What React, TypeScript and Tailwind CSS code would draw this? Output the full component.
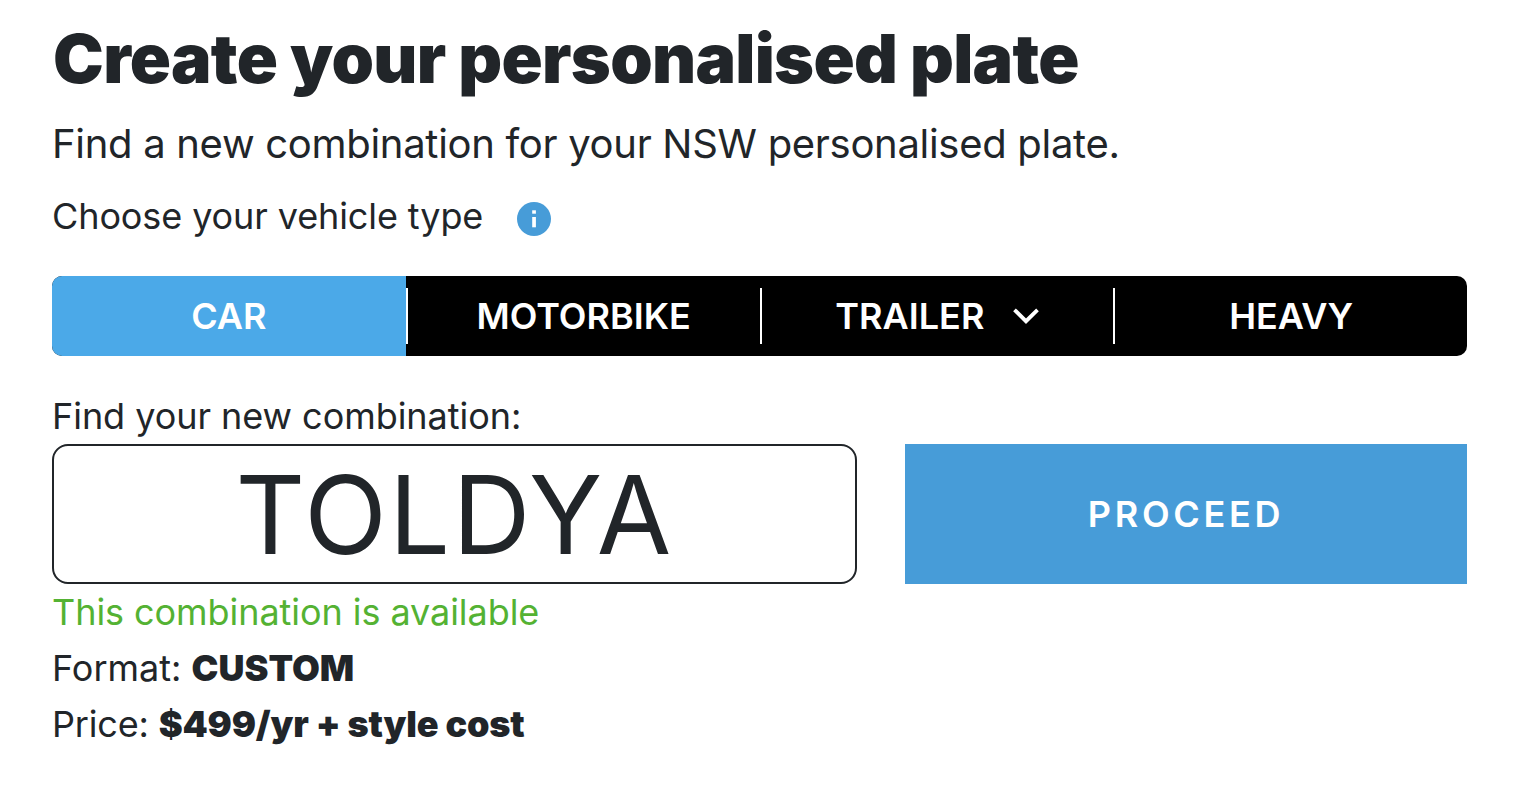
import { useState } from "react";

const VEHICLES = ["Car", "Motorbike", "Trailer", "Heavy"];

function InfoIcon() {
  return (
    <svg width="34" height="34" viewBox="0 0 34 34" aria-hidden="true">
      <circle cx="17" cy="17" r="17" fill="#479cd8" />
      <rect x="15.2" y="8.3" width="3.7" height="3.4" fill="#fff" />
      <rect x="15.2" y="15" width="3.7" height="10.3" fill="#fff" />
    </svg>
  );
}

function ChevronIcon() {
  return (
    <svg width="26" height="16" viewBox="0 0 26 16" fill="none" aria-hidden="true">
      <path d="M1.5 1.8 L13 13.2 L24.5 1.8" stroke="#fff" strokeWidth="3.8" />
    </svg>
  );
}

export default function App() {
  const [vehicle, setVehicle] = useState("Car");
  const [combination, setCombination] = useState("TOLDYA");

  return (
    <main className="h-[788px] bg-white pr-[55px] pl-[52px] pt-[18px] font-['Inter',sans-serif] text-[36px] text-[#212529]">
      <h1 className="h-[86px] pl-px text-[68px] leading-[80px] font-black tracking-[-0.7px] whitespace-nowrap">
        Create your personalised plate
      </h1>
      <p className="h-[82px] text-[40px] leading-[80px] tracking-[-0.3px] whitespace-nowrap">
        Find a new combination for your NSW personalised plate.
      </p>
      <div className="flex h-[90px] items-start gap-[34px] leading-[60px]">
        <span className="tracking-[-0.1px]">Choose your vehicle type</span>
        <button type="button" aria-label="Vehicle type info" className="mt-4">
          <InfoIcon />
        </button>
      </div>

      <div className="grid h-20 grid-cols-4 overflow-hidden rounded-[10px] bg-black font-semibold text-white">
        {VEHICLES.map((name, index) => (
          <button
            key={name}
            type="button"
            onClick={() => setVehicle(name)}
            className={name === vehicle ? "flex items-center bg-[#4ba9e8]" : "flex items-center"}
          >
            <span className={index > 0 ? "h-14 w-0.5 bg-white" : "h-14"} />
            <span className="flex flex-1 items-center justify-center gap-[29px] uppercase">
              {name}
              {name === "Trailer" && <ChevronIcon />}
            </span>
          </button>
        ))}
      </div>

      <label htmlFor="combination" className="mt-8 block h-14 leading-[56px] tracking-[-0.04px]">
        Find your new combination:
      </label>
      <div className="flex gap-12">
        <input
          id="combination"
          value={combination}
          onChange={(event) => setCombination(event.target.value)}
          className="h-[140px] w-[805px] rounded-[16px] border-2 border-[#212529] pt-0.5 text-center text-[108px] tracking-[2.3px] uppercase outline-none"
        />
        <button type="button" className="h-[140px] flex-1 bg-[#479cd8] font-semibold tracking-[3.7px] text-white">
          PROCEED
        </button>
      </div>

      <div className="leading-[56px]">
        <p className="tracking-[-0.06px] text-[#54b233]">This combination is available</p>
        <p>
          Format: <strong className="font-black">CUSTOM</strong>
        </p>
        <p className="tracking-[-0.17px]">
          Price: <strong className="font-black">$499/yr + style cost</strong>
        </p>
      </div>
    </main>
  );
}
